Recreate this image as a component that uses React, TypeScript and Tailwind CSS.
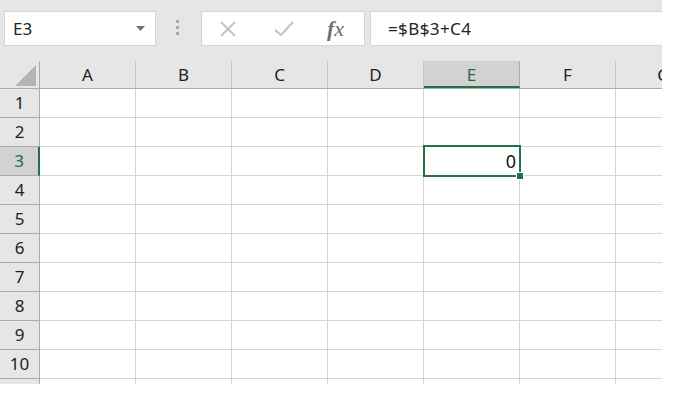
import React from "react";

const cols = ["A", "B", "C", "D", "E", "F", "G"];
const rows = [1, 2, 3, 4, 5, 6, 7, 8, 9, 10, 11];

export default function App() {
  return (
    <div className="w-[691px] h-[408px] bg-white font-['Segoe_UI','Noto_Sans',sans-serif] overflow-hidden">
      <div className="relative w-[662px] h-[384px] overflow-hidden bg-white">
        {/* toolbar */}
        <div className="flex items-start h-[60px] bg-[#e6e6e6] pt-[11px] pl-[4px]">
          <div className="flex items-center justify-between w-[152px] h-[35px] bg-white border border-[#d5d5d5] pl-[8px] pr-[10px]">
            <span className="text-[17px] text-[#222]">E3</span>
            <svg width="9" height="5" viewBox="0 0 9 5">
              <path d="M0 0h9L4.5 5z" fill="#737373" />
            </svg>
          </div>
          <div className="flex flex-col gap-[3px] ml-[20px] mt-[9px]">
            <div className="w-[3px] h-[3px] bg-[#a9a9a9]" />
            <div className="w-[3px] h-[3px] bg-[#a9a9a9]" />
            <div className="w-[3px] h-[3px] bg-[#a9a9a9]" />
          </div>
          <div className="flex items-center w-[164px] h-[35px] bg-white border border-[#d5d5d5] ml-[22px]">
            <svg width="20" height="20" viewBox="0 0 20 20" className="ml-[16px]">
              <path d="M3 3L17 17M17 3L3 17" stroke="#c4c4c4" strokeWidth="2" />
            </svg>
            <svg width="22" height="20" viewBox="0 0 22 20" className="ml-[35px]">
              <path d="M2 11L8 16L20 3" stroke="#c4c4c4" strokeWidth="2.2" fill="none" />
            </svg>
            <span className="ml-[32px] text-[22px] italic text-[#6f6f6f] font-['Liberation_Serif',serif] leading-none">
              <span className="font-bold">f</span>x
            </span>
          </div>
          <div className="flex items-center flex-1 h-[35px] bg-white border-y border-l border-[#d5d5d5] ml-[5px] pl-[17px]">
            <span className="text-[17px] tracking-[0.4px] text-[#222]">=$B$3+C4</span>
          </div>
        </div>

        {/* grid */}
        <div className="flex h-[29px] bg-[#e6e6e6] border-b border-[#ababab]">
          <div className="relative w-[40px] shrink-0 border-r border-[#ababab] mt-[1px]">
            <svg width="21" height="21" viewBox="0 0 21 21" className="absolute right-[3px] bottom-[2px]">
              <path d="M21 0V21H0z" fill="#b4b4b4" />
            </svg>
          </div>
          {cols.map((c) => (
            <div
              key={c}
              className={
                c === "E"
                  ? "flex items-center justify-center w-[96px] shrink-0 bg-[#d2d2d2] border-r border-[#ababab] border-b-2 border-b-[#217346] text-[17px] text-[#1e6b3f] mt-[1px] pt-[2px]"
                  : "flex items-center justify-center w-[96px] shrink-0 border-r border-[#c6c6c6] text-[17px] text-[#222] mt-[1px]"
              }
            >
              {c}
            </div>
          ))}
        </div>
        {rows.map((r) => (
          <div key={r} className="flex h-[29px]">
            <div
              className={
                r === 3
                  ? "flex items-center justify-center w-[40px] shrink-0 bg-[#d2d2d2] border-r-2 border-r-[#217346] border-b border-[#ababab] text-[17px] text-[#1e6b3f]"
                  : "flex items-center justify-center w-[40px] shrink-0 bg-[#e6e6e6] border-r border-b border-[#ababab] text-[17px] text-[#222]"
              }
            >
              {r <= 10 ? r : ""}
            </div>
            {cols.map((c) => (
              <div
                key={c}
                className="flex items-center justify-end w-[96px] shrink-0 border-r border-b border-[#d4d4d4] pr-[3px] text-[18px] text-[#111]"
              >
                {r === 3 && c === "E" ? "0" : ""}
              </div>
            ))}
          </div>
        ))}

        {/* selection */}
        <div className="absolute left-[423px] top-[145px] w-[98px] h-[32px] border-2 border-[#217346]" />
        <div className="absolute left-[516px] top-[172px] w-[8px] h-[8px] bg-[#217346] border border-white" />
      </div>
    </div>
  );
}
